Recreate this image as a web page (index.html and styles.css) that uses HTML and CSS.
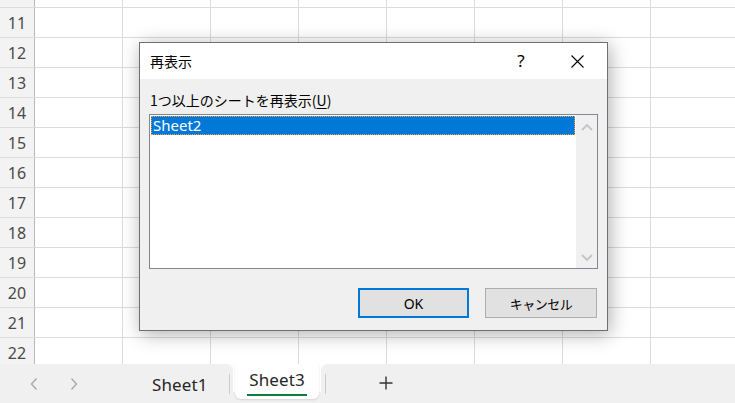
FILE: index.html
```html
<!DOCTYPE html>
<html lang="ja">
<head>
<meta charset="utf-8">
<title>再表示</title>
<link rel="stylesheet" href="styles.css">
</head>
<body>
<div class="app">
  <div class="sheet">
    <div class="row partial"><div class="rh"></div><div class="cell"></div><div class="cell"></div><div class="cell"></div><div class="cell"></div><div class="cell"></div><div class="cell"></div><div class="cell"></div><div class="cell"></div></div>
    <div class="row"><div class="rh">11</div><div class="cell"></div><div class="cell"></div><div class="cell"></div><div class="cell"></div><div class="cell"></div><div class="cell"></div><div class="cell"></div><div class="cell"></div></div>
    <div class="row"><div class="rh">12</div><div class="cell"></div><div class="cell"></div><div class="cell"></div><div class="cell"></div><div class="cell"></div><div class="cell"></div><div class="cell"></div><div class="cell"></div></div>
    <div class="row"><div class="rh">13</div><div class="cell"></div><div class="cell"></div><div class="cell"></div><div class="cell"></div><div class="cell"></div><div class="cell"></div><div class="cell"></div><div class="cell"></div></div>
    <div class="row"><div class="rh">14</div><div class="cell"></div><div class="cell"></div><div class="cell"></div><div class="cell"></div><div class="cell"></div><div class="cell"></div><div class="cell"></div><div class="cell"></div></div>
    <div class="row"><div class="rh">15</div><div class="cell"></div><div class="cell"></div><div class="cell"></div><div class="cell"></div><div class="cell"></div><div class="cell"></div><div class="cell"></div><div class="cell"></div></div>
    <div class="row"><div class="rh">16</div><div class="cell"></div><div class="cell"></div><div class="cell"></div><div class="cell"></div><div class="cell"></div><div class="cell"></div><div class="cell"></div><div class="cell"></div></div>
    <div class="row"><div class="rh">17</div><div class="cell"></div><div class="cell"></div><div class="cell"></div><div class="cell"></div><div class="cell"></div><div class="cell"></div><div class="cell"></div><div class="cell"></div></div>
    <div class="row"><div class="rh">18</div><div class="cell"></div><div class="cell"></div><div class="cell"></div><div class="cell"></div><div class="cell"></div><div class="cell"></div><div class="cell"></div><div class="cell"></div></div>
    <div class="row"><div class="rh">19</div><div class="cell"></div><div class="cell"></div><div class="cell"></div><div class="cell"></div><div class="cell"></div><div class="cell"></div><div class="cell"></div><div class="cell"></div></div>
    <div class="row"><div class="rh">20</div><div class="cell"></div><div class="cell"></div><div class="cell"></div><div class="cell"></div><div class="cell"></div><div class="cell"></div><div class="cell"></div><div class="cell"></div></div>
    <div class="row"><div class="rh">21</div><div class="cell"></div><div class="cell"></div><div class="cell"></div><div class="cell"></div><div class="cell"></div><div class="cell"></div><div class="cell"></div><div class="cell"></div></div>
    <div class="row"><div class="rh">22</div><div class="cell"></div><div class="cell"></div><div class="cell"></div><div class="cell"></div><div class="cell"></div><div class="cell"></div><div class="cell"></div><div class="cell"></div></div>
  </div>

  <div class="tabbar">
    <div class="seg-left">
      <svg class="nav nav-prev" width="10" height="14" viewBox="0 0 10 14"><polyline points="7.5,1.5 2.5,7 7.5,12.5" fill="none" stroke="#a6a6a6" stroke-width="1.3"/></svg>
      <svg class="nav nav-next" width="10" height="14" viewBox="0 0 10 14"><polyline points="2.5,1.5 7.5,7 2.5,12.5" fill="none" stroke="#a6a6a6" stroke-width="1.3"/></svg>
      <span class="tab-label">Sheet1</span>
      <span class="sep sep-left"></span>
    </div>
    <div class="tab-wrap">
      <div class="tab active"><span class="tab-label active-label">Sheet3</span></div>
    </div>
    <div class="seg-right">
      <span class="sep"></span>
      <svg class="plus" width="16" height="16" viewBox="0 0 16 16"><path d="M8 1.5V14.5M1.5 8H14.5" stroke="#333" stroke-width="1.4" fill="none"/></svg>
    </div>
  </div>

  <div class="dialog">
    <div class="titlebar">
      <span class="title">再表示</span>
      <span class="help">?</span>
      <span class="close"><svg width="13" height="13" viewBox="0 0 13 13"><path d="M0.5 0.5L12.5 12.5M12.5 0.5L0.5 12.5" stroke="#000" stroke-width="1.1" fill="none"/></svg></span>
    </div>
    <div class="dbody">
      <div class="label">1つ以上のシートを再表示(<u>U</u>)</div>
      <div class="listbox">
        <div class="list">
          <div class="item selected">Sheet2</div>
        </div>
        <div class="vscroll">
          <svg width="12" height="8" viewBox="0 0 12 8"><polyline points="1,7 6,2 11,7" fill="none" stroke="#c4c4c4" stroke-width="1.8"/></svg>
          <svg width="12" height="8" viewBox="0 0 12 8"><polyline points="1,1 6,6 11,1" fill="none" stroke="#c4c4c4" stroke-width="1.8"/></svg>
        </div>
      </div>
      <div class="buttons">
        <button class="btn default">OK</button>
        <button class="btn">キャンセル</button>
      </div>
    </div>
  </div>
</div>
</body>
</html>
```

FILE: styles.css
```css
html, body {
  margin: 0;
  padding: 0;
  background: #fff;
}

.app {
  position: relative;
  width: 735px;
  height: 403px;
  overflow: hidden;
  font-family: "Noto Sans", "Open Sans", "Noto Sans CJK JP", sans-serif;
}

.sheet {
  height: 364px;
  overflow: hidden;
}

.row {
  display: flex;
  height: 29px;
  border-bottom: 1px solid #dcdcdc;
}

.row.partial {
  height: 7px;
}

.rh {
  flex: none;
  width: 34px;
  border-right: 1px solid #b9b9b9;
  background: #f3f3f3;
  color: #4a4a4a;
  font-size: 16px;
  line-height: 31px;
  text-align: center;
}

.cell {
  flex: none;
  width: 87px;
  border-right: 1px solid #dcdcdc;
}

/* tab bar */
.tabbar {
  display: flex;
  height: 39px;
  background: #fff;
}

.seg-left {
  flex: none;
  width: 233px;
  background: #f0f0f0;
  border-top-right-radius: 6px;
  display: flex;
  align-items: center;
}

.nav {
  flex: none;
}

.nav-prev {
  margin-left: 29px;
}

.nav-next {
  margin-left: 30px;
}

.tab-label {
  font-size: 17px;
  color: #262626;
  letter-spacing: 0.1px;
}

.seg-left .tab-label {
  margin-left: 73px;
  padding-top: 2px;
}

.sep {
  flex: none;
  width: 1px;
  height: 20px;
  background: #cbcbcb;
}

.sep-left {
  margin-left: auto;
  margin-right: 3px;
}

.tab-wrap {
  flex: none;
  width: 88px;
  background: linear-gradient(#fff 0 28px, #f0f0f0 28px);
}

.tab {
  margin: 0 2px;
  height: 35px;
  background: #fff;
  border-radius: 0 0 6px 6px;
  box-shadow: 0 1px 2px rgba(0, 0, 0, 0.12);
  display: flex;
  justify-content: center;
  align-items: flex-start;
}

.active-label {
  margin-top: 5px;
  padding: 0 2px 3px;
  border-bottom: 2px solid #107c41;
  line-height: 22px;
}

.seg-right {
  flex: 1;
  background: #f0f0f0;
  border-top-left-radius: 6px;
  display: flex;
  align-items: center;
}

.seg-right .sep {
  margin-left: 4px;
}

.plus {
  margin-left: 52px;
  margin-top: -2px;
}

/* dialog */
.dialog {
  position: absolute;
  left: 139px;
  top: 42px;
  width: 467px;
  height: 287px;
  border: 1px solid #6f6f6f;
  background: #f0f0f0;
  box-shadow: 2px 3px 18px rgba(0, 0, 0, 0.32);
  display: flex;
  flex-direction: column;
  font-family: "Noto Sans CJK JP", "Noto Sans", sans-serif;
  color: #000;
}

.titlebar {
  flex: none;
  height: 36px;
  background: #fff;
  display: flex;
  align-items: center;
}

.title {
  flex: 1;
  padding-left: 10px;
  font-size: 14px;
  line-height: 36px;
}

.help {
  flex: none;
  width: 46px;
  text-align: center;
  font-family: "Noto Sans", sans-serif;
  font-size: 17px;
  line-height: 34px;
}

.close {
  flex: none;
  width: 46px;
  margin-left: 10px;
  margin-right: 7px;
  display: flex;
  justify-content: center;
  align-items: center;
  height: 36px;
}

.dbody {
  flex: 1;
  padding: 12px 8px 0 9px;
  display: flex;
  flex-direction: column;
}

.label {
  font-size: 14px;
  line-height: 18px;
  padding-left: 1px;
}

.label u {
  text-underline-offset: 2px;
}

.listbox {
  margin-top: 5px;
  width: 447px;
  height: 153px;
  border: 1px solid #828790;
  display: flex;
  background: #fff;
}

.list {
  flex: 1;
  padding: 1px;
}

.item {
  height: 17px;
  font-family: "Noto Sans", "Open Sans", sans-serif;
  font-size: 15px;
  line-height: 17px;
  padding-left: 1px;
}

.item.selected {
  background: #0078d7;
  color: #fff;
  border: 1px dotted #e8a040;
}

.vscroll {
  flex: none;
  width: 21px;
  background: #f0f0f0;
  display: flex;
  flex-direction: column;
  justify-content: space-between;
  align-items: center;
  padding: 8px 0 6px;
}

.buttons {
  margin-top: 19px;
  display: flex;
  justify-content: flex-end;
  gap: 16px;
  padding-right: 2px;
}

.btn {
  width: 112px;
  height: 30px;
  background: #e1e1e1;
  border: 1px solid #adadad;
  font-family: "Noto Sans CJK JP", "Noto Sans", sans-serif;
  font-size: 13px;
  letter-spacing: -0.5px;
  color: #000;
  padding: 0;
  margin: 0;
}

.btn.default {
  width: 111px;
  border: 2px solid #0078d7;
  font-family: "Noto Sans", sans-serif;
  font-size: 14px;
  letter-spacing: 0;
}
```
